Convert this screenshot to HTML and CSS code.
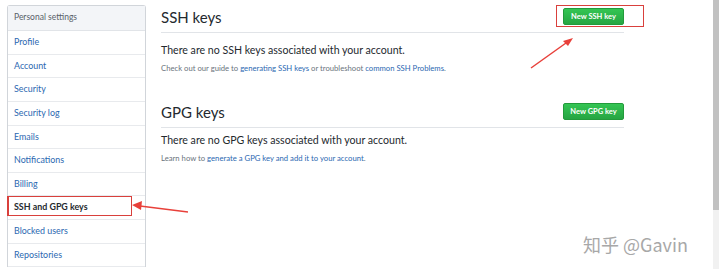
FILE: index.html
```html
<!DOCTYPE html>
<html lang="en">
<head>
  <meta charset="UTF-8" />
  <title>SSH and GPG keys</title>
  <link rel="stylesheet" href="styles.css">
</head>
<body>

  <div class="page">
    <!-- SETTINGS MENU -->
    <nav class="menu">
      <div class="menu-heading">Personal settings</div>
      <a class="menu-item" href="#">Profile</a>
      <a class="menu-item" href="#">Account</a>
      <a class="menu-item" href="#">Security</a>
      <a class="menu-item" href="#">Security log</a>
      <a class="menu-item" href="#">Emails</a>
      <a class="menu-item" href="#">Notifications</a>
      <a class="menu-item" href="#">Billing</a>
      <a class="menu-item selected" href="#">SSH and GPG keys</a>
      <a class="menu-item" href="#">Blocked users</a>
      <a class="menu-item" href="#">Repositories</a>
    </nav>

    <!-- KEYS -->
    <main class="content">
      <div class="subhead">
        <h2>SSH keys</h2>
        <button class="btn">New SSH key</button>
      </div>
      <p class="note">There are no SSH keys associated with your account.</p>
      <p class="hint">Check out our guide to <a href="#">generating SSH keys</a> or troubleshoot <a href="#">common SSH Problems</a>.</p>

      <div class="subhead second">
        <h2>GPG keys</h2>
        <button class="btn">New GPG key</button>
      </div>
      <p class="note tight">There are no GPG keys associated with your account.</p>
      <p class="hint">Learn how to <a href="#">generate a GPG key and add it to your account</a>.</p>
    </main>

    <div class="scrollbar"><div class="thumb"></div></div>
  </div>

  <!-- annotations drawn over the screenshot -->
  <div class="mark mark-button"></div>
  <div class="mark mark-menu"></div>
  <svg class="arrows" width="720" height="269" viewBox="0 0 720 269">
    <line x1="531" y1="68" x2="566" y2="43" stroke="#e8403a" stroke-width="1.5"/>
    <polygon points="573,38 563,41 568,46" fill="#e8403a"/>
    <line x1="188" y1="212" x2="140" y2="206" stroke="#e8403a" stroke-width="1.5"/>
    <polygon points="132,205 142,201 141,210" fill="#e8403a"/>
  </svg>

  <div class="watermark">知乎 @Gavin</div>

</body>
</html>
```

FILE: styles.css
```css
body {
  margin: 0;
  font-family: Lato, "Liberation Sans", "Noto Sans CJK SC", sans-serif;
  background: white;
  color: #24292e;
  overflow: hidden;
}
.page {
  display: flex;
  height: 269px;
}
.menu {
  width: 137px;
  margin: 5px 0 0 7px;
  border: 1px solid #d1d5da;
  border-bottom: none;
  border-radius: 3px 3px 0 0;
  display: flex;
  flex-direction: column;
  align-self: flex-start;
}
.menu-heading {
  height: 24px;
  line-height: 23px;
  padding-left: 6px;
  font-size: 8.5px;
  color: #586069;
  background: #f3f5f8;
  border-bottom: 1px solid #e1e4e8;
}
.menu-item {
  height: 22.65px;
  line-height: 22.65px;
  padding-left: 6px;
  font-size: 8.9px;
  color: #2b68b1;
  text-decoration: none;
  border-bottom: 1px solid #e8eaed;
}
.menu-item.selected {
  color: #24292e;
  font-weight: bold;
}
.content {
  width: 463px;
  margin-left: 15px;
}
.subhead {
  display: flex;
  justify-content: space-between;
  align-items: center;
  height: 32px;
  border-bottom: 1px solid #e1e4e8;
}
.subhead.second {
  margin-top: 22px;
}
h2 {
  margin: 0;
  font-size: 15px;
  font-weight: normal;
  padding-top: 2px;
}
.btn {
  font-family: inherit;
  font-size: 7.5px;
  font-weight: bold;
  color: white;
  width: 61px;
  height: 17px;
  padding: 0;
  margin-top: 1px;
  border: 1px solid #239a3b;
  border-radius: 2px;
  background: linear-gradient(#34c553, #26a543);
}
.note {
  margin: 11px 0 0;
  font-size: 10.6px;
}
.note.tight {
  margin-top: 6px;
}
.hint {
  margin: 7px 0 0;
  font-size: 7.7px;
  color: #6a737d;
}
.hint a {
  color: #2b68b1;
  text-decoration: none;
}
.scrollbar {
  margin-left: auto;
  width: 6px;
  margin-right: 1px;
  background: #f1f1f1;
}
.thumb {
  height: 210px;
  background: #c1c1c1;
}
.mark {
  position: absolute;
  border: 1.5px solid #d9403c;
}
.mark-button {
  left: 556px;
  top: 5px;
  width: 86px;
  height: 20px;
}
.mark-menu {
  left: 7px;
  top: 196px;
  width: 122px;
  height: 18px;
  border-left-width: 2px;
}
.arrows {
  position: absolute;
  left: 0;
  top: 0;
}
.watermark {
  position: absolute;
  left: 583px;
  top: 231px;
  font-size: 18px;
  color: #a8a8a8;
  text-shadow: 0 0 1px white;
  font-family: "Noto Sans CJK SC", sans-serif;
}
```
